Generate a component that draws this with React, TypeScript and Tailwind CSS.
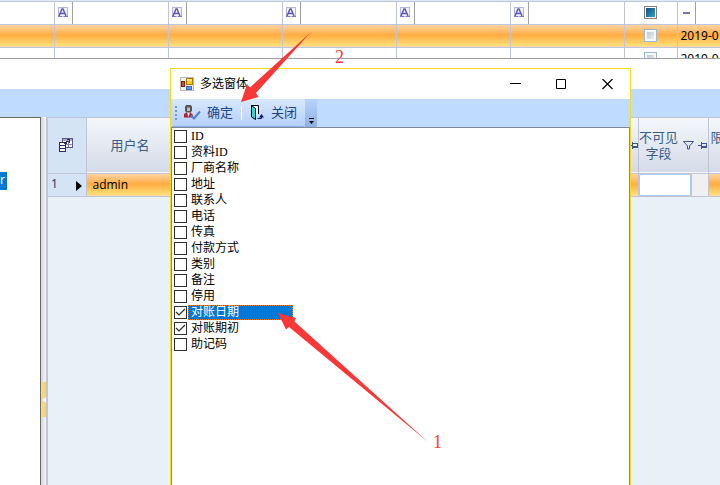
import { useState } from "react";

const fields = [
  "ID",
  "资料ID",
  "厂商名称",
  "地址",
  "联系人",
  "电话",
  "传真",
  "付款方式",
  "类别",
  "备注",
  "停用",
  "对账日期",
  "对账期初",
  "助记码",
];

function TextFilterIcon() {
  return (
    <svg width="11" height="11" viewBox="0 0 11 11" className="mx-auto">
      <rect x="0.5" y="0.5" width="9" height="9" fill="#f4f4fc" stroke="#b4b4dc" />
      <path d="M1 9L4 2h1l3 7M2.500 6.500h4" fill="none" stroke="#5c58b8" strokeWidth="1.500" />
      <path d="M0 9.500h4M6 9.500h4" stroke="#7c78c4" />
    </svg>
  );
}

function ColumnPickerIcon() {
  return (
    <svg width="15" height="15" viewBox="0 0 15 15" className="mx-auto" shapeRendering="crispEdges">
      <rect x="3.500" y="0.500" width="10" height="9" fill="#fff" stroke="#5c5890" />
      <path d="M4 1h9v2H4z" fill="#a8a8cc" />
      <path d="M7 6.500h6M9.500 3v6" stroke="#8884b0" />
      <rect x="0.500" y="4.500" width="6" height="9" fill="#fff" stroke="#302c68" />
      <path d="M1 7.500h5M1 10.500h5" stroke="#302c68" />
      <path d="M5 5.500h2.500V3.500H10M8 1.500h2v3" fill="none" stroke="#302c68" />
    </svg>
  );
}

function PinIcon() {
  return (
    <svg width="9" height="9" viewBox="0 0 9 9" className="shrink-0" shapeRendering="crispEdges">
      <path d="M0 4.500h3M3.500 1v7M3 2.500h5.500v4H3M3 5.500h5" fill="none" stroke="#3c5488" />
    </svg>
  );
}

function FunnelIcon() {
  return (
    <svg width="11" height="9" viewBox="0 0 11 9" className="shrink-0">
      <path d="M0.500 0.500h10L6.500 5v3h-2V5z" fill="none" stroke="#3c5488" />
    </svg>
  );
}

function FormIcon() {
  return (
    <svg width="14" height="14" viewBox="0 0 14 14" shapeRendering="crispEdges">
      <path d="M0.500 0.500h13v13H0.500z" fill="#f0f0f0" stroke="#b8b8b8" />
      <path d="M6.500 1.500h6v6h-6z" fill="#ffc820" stroke="#a87808" />
      <path d="M7 2h5v2H7z" fill="#ffe480" />
      <path d="M1.500 4.500h3v5h-3z" fill="#d84838" stroke="#8c1c14" />
      <path d="M6.500 9.500h5v3h-5z" fill="#5c98e8" stroke="#3c68b4" />
    </svg>
  );
}

function ConfirmIcon() {
  return (
    <svg width="17" height="15" viewBox="0 0 17 15">
      <path d="M2 0h5l1 2v4L6 8H3L1 6V2z" fill="#585454" />
      <path d="M3 2.500h3V6H3z" fill="#c8bcb8" />
      <path d="M0 9l2.500-1.500h4L9 10v2.500H0z" fill="#a82838" />
      <path d="M3 7.500L4.500 12 6 7.500z" fill="#f0f0f8" />
      <path d="M7 10.500l3 3 6-7" fill="none" stroke="#5080d0" strokeWidth="2" />
    </svg>
  );
}

function ExitIcon() {
  return (
    <svg width="15" height="16" viewBox="0 0 15 16">
      <path d="M1.500 12V0.500h7V9" fill="#fff" stroke="#000" />
      <path d="M1.500 0.500l4 3v11l-4-2.500z" fill="#28dcdc" stroke="#000" />
      <path d="M7.500 13.500h4V12" fill="none" stroke="#101080" />
      <path d="M9 12.500h5L11.500 9z" fill="#101080" />
    </svg>
  );
}

function FilterCell() {
  return (
    <td className="border-r border-[#c0c4dc] p-0">
      <div className="flex h-full">
        <div className="flex h-[22px] w-[18px] items-center border-r border-[#a0a0a0]">
          <TextFilterIcon />
        </div>
      </div>
    </td>
  );
}

function RowCheck({ label }: { label: string }) {
  return (
    <input
      type="checkbox"
      aria-label={label}
      className="mx-auto block size-[13px] appearance-none border border-[#9cb8d8] bg-linear-to-br from-[#b8bcc8] to-[#f8f8f8] outline-2 -outline-offset-3 outline-[#f4f8fc]"
    />
  );
}

function TopGrid() {
  return (
    <div className="h-[59px] shrink-0 overflow-hidden border-b border-[#a0a0a0]">
      <table className="w-full table-fixed border-collapse text-[12px] leading-4">
        <colgroup>
          <col className="w-[54px]" />
          <col />
          <col />
          <col />
          <col />
          <col />
          <col className="w-[53px]" />
          <col className="w-[43px]" />
        </colgroup>
        <tbody>
          <tr className="h-px border-b border-[#c0c4dc] bg-[#dce8f4]">
            <td colSpan={8} className="p-0" />
          </tr>
          <tr className="h-[23px] border-b border-[#c0c4dc]">
            <td className="border-r border-[#c0c4dc] p-0" />
            <FilterCell />
            <FilterCell />
            <FilterCell />
            <FilterCell />
            <FilterCell />
            <td className="border-r border-[#c0c4dc] p-0">
              <input
                type="checkbox"
                aria-label="筛选"
                className="mx-auto block size-[13px] appearance-none border border-[#808080] bg-linear-to-br from-[#104878] to-[#38a8d8] outline-1 -outline-offset-2 outline-white"
              />
            </td>
            <td className="p-0">
              <div className="flex h-[22px] w-[18px] items-center justify-center border-r border-[#a0a0a0]">
                <span className="h-[2px] w-[7px] bg-[#7874a4]" />
              </div>
            </td>
          </tr>
          <tr className="h-[23px] border-b border-[#c0c4dc] bg-linear-to-b from-[#ffd8a8] via-[#ffac40] to-[#ffe078]">
            {[0, 1, 2, 3, 4, 5].map((i) => (
              <td key={i} className="border-r border-[#c0c4dc] p-0" />
            ))}
            <td className="border-r border-[#c0c4dc] p-0">
              <RowCheck label="行 1" />
            </td>
            <td className="p-0 pl-[3px] whitespace-nowrap">2019-0</td>
          </tr>
          <tr className="h-[23px]">
            {[0, 1, 2, 3, 4, 5].map((i) => (
              <td key={i} className="border-r border-[#c0c4dc] p-0" />
            ))}
            <td className="border-r border-[#c0c4dc] p-0">
              <RowCheck label="行 2" />
            </td>
            <td className="p-0 pl-[3px] whitespace-nowrap">2019-0</td>
          </tr>
        </tbody>
      </table>
    </div>
  );
}

function UserGrid() {
  return (
    <div className="min-w-0 flex-1 border-t border-l-2 border-[#c0c4d4] bg-[#e8f0f8]">
      <table className="w-full table-fixed border-collapse text-[13px] leading-4 text-[#3c5c88]">
        <colgroup>
          <col className="w-[38px]" />
          <col />
          <col className="w-[70px]" />
          <col className="w-[12px]" />
        </colgroup>
        <thead>
          <tr className="h-[55px] border-b border-[#c0c4d4] bg-linear-to-b from-[#f4f8fa] to-[#d4dae8]">
            <th className="border-r border-[#c0c4d4] bg-[#d4e4f4] p-0">
              <ColumnPickerIcon />
            </th>
            <th className="border-r border-[#c0c4d4] p-0 pl-6 font-normal">
              <div className="flex items-center justify-between">
                用户名
                <PinIcon />
              </div>
            </th>
            <th className="border-r border-[#c0c4d4] p-0 font-normal">
              <div className="flex items-center justify-end gap-1 pr-px">
                <span className="w-10">不可见字段</span>
                <FunnelIcon />
                <PinIcon />
              </div>
            </th>
            <th className="p-0 pb-4 pl-[2px] text-left font-normal whitespace-nowrap">限</th>
          </tr>
        </thead>
        <tbody>
          <tr className="h-[23px] border-b border-[#c0c4d4] bg-linear-to-b from-[#ffd8a8] via-[#ffac40] to-[#ffe078]">
            <td className="border-r border-[#c0c4d4] bg-[#d4e4f4] p-0">
              <div className="flex items-center justify-between pr-1 pb-px pl-[3px] text-[12px] text-[#1c3c70]">
                1
                <svg width="6" height="10" viewBox="0 0 6 10" className="mt-1">
                  <path d="M0 0l6 5-6 5z" fill="#000" />
                </svg>
              </div>
            </td>
            <td className="border-r border-[#c0c4d4] p-0 pl-[6px] font-['Open_Sans',sans-serif] text-[12px] text-black">
              admin
            </td>
            <td className="border-r border-[#c0c4d4] p-0">
              <div className="flex h-[22px]">
                <input
                  aria-label="不可见字段"
                  className="w-[52px] rounded-xs border border-[#a8ccf4] bg-white px-1"
                />
                <button aria-label="选择字段" className="flex-1 border-l border-[#c0c4d4] bg-[#f0f0f0]" />
              </div>
            </td>
            <td className="p-0" />
          </tr>
        </tbody>
      </table>
    </div>
  );
}

function FieldList() {
  const [checked, setChecked] = useState(["对账日期", "对账期初"]);

  const toggle = (name: string) =>
    setChecked((prev) => (prev.includes(name) ? prev.filter((n) => n !== name) : [...prev, name]));

  return (
    <div className="flex flex-1 flex-col items-start border border-b-0 border-[#80889c] bg-white pl-[2px] font-['Liberation_Serif','Noto_Sans_CJK_SC',serif] text-[12px] leading-4">
      {fields.map((name) => (
        <label key={name} className="flex h-4 gap-px text-black">
          <span className="mt-[2px] grid size-[13px] items-center justify-items-center">
            <input
              type="checkbox"
              checked={checked.includes(name)}
              onChange={() => toggle(name)}
              className="peer col-start-1 row-start-1 size-[13px] appearance-none border border-[#303030] bg-white"
            />
            <svg
              width="11"
              height="9"
              viewBox="0 0 11 9"
              className="pointer-events-none invisible col-start-1 row-start-1 peer-checked:visible"
            >
              <path d="M1 4l3 3 6-6" fill="none" stroke="#303030" strokeWidth="1.200" />
            </svg>
          </span>
          <span
            className={
              name === "对账日期"
                ? "mt-px w-[105px] bg-[#0078d8] pl-[3px] leading-[14px] text-white outline-1 -outline-offset-1 outline-[#e08030] outline-dotted"
                : "pl-[3px]"
            }
          >
            {name}
          </span>
        </label>
      ))}
    </div>
  );
}

function Dialog() {
  return (
    <div
      role="dialog"
      aria-labelledby="dialog-title"
      className="absolute top-[68px] right-[89px] bottom-0 left-[170px] flex flex-col border border-b-0 border-[#f8dc18] bg-white"
    >
      <div className="flex h-[30px] shrink-0 items-center pl-[9px]">
        <FormIcon />
        <h1 id="dialog-title" className="flex-1 pl-[6px] text-[12px] text-black">
          多选窗体
        </h1>
        <button aria-label="最小化" className="grid h-full w-[46px] place-items-center">
          <svg width="11" height="11" viewBox="0 0 11 11">
            <path d="M0 4.500h11" stroke="#000" />
          </svg>
        </button>
        <button aria-label="最大化" className="grid h-full w-[46px] place-items-center">
          <svg width="11" height="11" viewBox="0 0 11 11">
            <path d="M0.500 0.500h9v9h-9z" fill="none" stroke="#000" />
          </svg>
        </button>
        <button aria-label="关闭窗口" className="grid h-full w-[46px] place-items-center">
          <svg width="11" height="11" viewBox="0 0 11 11">
            <path d="M0.500 0l10 10M10.500 0l-10 10" stroke="#000" strokeWidth="1.200" />
          </svg>
        </button>
      </div>

      <div className="flex h-7 shrink-0 bg-[#bfdbff] pl-px text-[13px] text-[#1c4488]">
        <div className="flex items-center rounded-r-xs border-b border-[#88b0e8] bg-linear-to-b from-[#d8e8fc] to-[#b4d0f8] pr-2 pl-[3px]">
          <svg width="2" height="14" viewBox="0 0 2 14">
            <path d="M1 0v14" stroke="#6c9cdc" strokeWidth="2" strokeDasharray="2 2" />
          </svg>
          <button className="flex items-center gap-[6px] pr-2 pl-[7px]">
            <ConfirmIcon />
            确定
          </button>
          <span className="h-[14px] w-px bg-white" />
          <button className="flex items-center gap-[6px] pl-2">
            <ExitIcon />
            关闭
          </button>
        </div>
        <button
          aria-label="更多"
          className="flex w-3 items-end justify-center rounded-r-xs bg-linear-to-b from-[#b8d4fc] to-[#8cb0e4] pb-[2px]"
        >
          <svg width="7" height="7" viewBox="0 0 7 7">
            <path d="M1 0.500h5" stroke="#000" />
            <path d="M1 3h5L3.500 6z" fill="#000" />
          </svg>
        </button>
      </div>

      <FieldList />
    </div>
  );
}

function Annotations() {
  return (
    <div className="pointer-events-none absolute inset-0 font-['Liberation_Serif',serif] text-[18px] leading-5 text-[#f83838]">
      <svg width="720" height="485" viewBox="0 0 720 485" className="absolute top-0 left-0">
        <path d="M311 32L256 93l2.500 4L241 102l6-18 3 3.500z" fill="#f83838" />
        <path d="M278 313l18 5-1.500 3.500L428 442 289 327l-3 2.500z" fill="#f83838" />
      </svg>
      <span className="absolute top-[47px] left-[335px]">2</span>
      <span className="absolute top-[432px] left-[433px]">1</span>
    </div>
  );
}

export default function App() {
  return (
    <div className="relative flex h-screen flex-col overflow-hidden bg-white font-['Noto_Sans','Noto_Sans_CJK_SC',sans-serif]">
      <TopGrid />
      <div className="mt-[30px] h-7 shrink-0 bg-[#bfdbff]" />

      <div className="flex flex-1">
        <div className="w-[41px] border-t border-r border-[#686868] bg-white pt-[54px]">
          <div className="h-[18px] w-[7px] overflow-hidden bg-[#0078d8] text-[12px] leading-4 text-white">r</div>
        </div>
        <div className="w-[5px] bg-linear-to-r from-[#d8d8d8] to-[#f4f4f4] pt-[265px]">
          <button
            aria-label="收起"
            className="grid h-[35px] w-full place-items-center bg-linear-to-r from-[#f8d898] to-[#ffd040]"
          >
            <svg width="4" height="6" viewBox="0 0 4 6">
              <path d="M4 0v6L0 3z" fill="#fff" />
            </svg>
          </button>
        </div>
        <UserGrid />
      </div>

      <Dialog />
      <Annotations />
    </div>
  );
}
